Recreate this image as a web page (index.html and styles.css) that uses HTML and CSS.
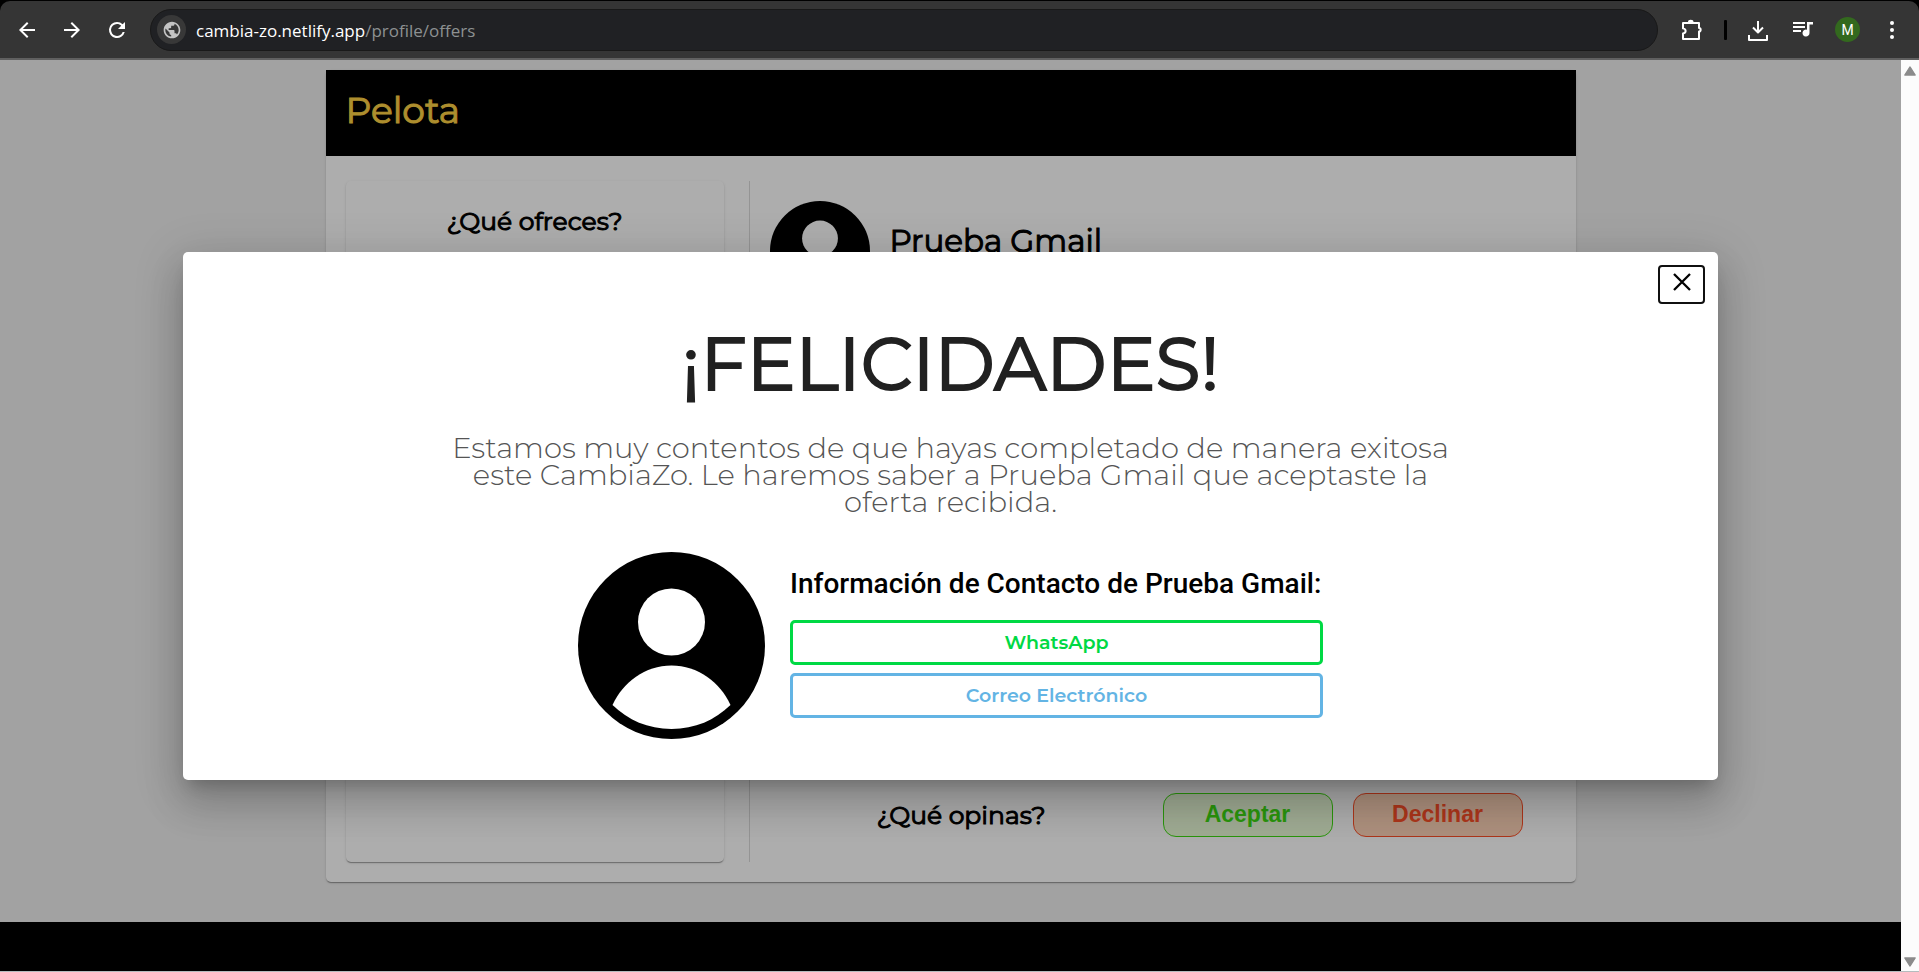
FILE: index.html
```html
<!DOCTYPE html>
<html lang="es">
<head>
<meta charset="utf-8">
<title>CambiaZo</title>
<link rel="stylesheet" href="styles.css">
</head>
<body>
<div class="browser">
  <div class="tabstrip">
  <header class="toolbar">
    <nav class="nav">
      <button class="tool" aria-label="Atrás"><svg class="icon" viewBox="0 0 24 24"><path d="M20 11H7.83l5.59-5.59L12 4l-8 8 8 8 1.41-1.41L7.83 13H20v-2z"/></svg></button>
      <button class="tool" aria-label="Adelante"><svg class="icon" viewBox="0 0 24 24"><path d="M12 4l-1.41 1.41L16.17 11H4v2h12.17l-5.58 5.59L12 20l8-8z"/></svg></button>
      <button class="tool" aria-label="Recargar"><svg class="icon" viewBox="0 0 24 24"><path d="M17.65 6.35A7.96 7.96 0 0 0 12 4a8 8 0 1 0 7.73 10h-2.08A6 6 0 1 1 12 6c1.66 0 3.14.69 4.22 1.78L13 11h7V4l-2.35 2.35z"/></svg></button>
    </nav>
    <div class="address">
      <span class="site"><svg class="globe" viewBox="0 0 24 24"><path d="M12 2C6.48 2 2 6.48 2 12s4.480 10 10 10 10-4.480 10-10S17.520 2 12 2zm-1 17.930c-3.950-.490-7-3.850-7-7.930 0-.620.080-1.210.210-1.790L9 15v1c0 1.100.900 2 2 2v1.930zm6.900-2.540c-.260-.810-1-1.390-1.900-1.390h-1v-3c0-.550-.450-1-1-1H8v-2h2c.550 0 1-.450 1-1V7h2c1.100 0 2-.900 2-2v-.410c2.930 1.190 5 4.060 5 7.410 0 2.080-.800 3.970-2.100 5.390z"/></svg></span>
      <span class="url">cambia-zo.netlify.app<span class="path">/profile/offers</span></span>
    </div>
    <div class="actions">
      <button class="tool" aria-label="Extensiones"><svg class="icon line" viewBox="0 0 24 24"><path d="M3 5h16v5c2.200 0 2.200 3.600 0 3.600V21H3v-5.600c3.500-.800 3.500-4.200 0-5z"/><path d="M9 4c0-1.600 3.500-1.600 3.500 0z"/></svg></button>
      <span class="bar"></span>
      <button class="tool" aria-label="Descargas"><svg class="icon line" viewBox="0 0 24 24"><path d="M11 3v11M6 9.500l5 5 5-5M2 17v5h18v-5"/></svg></button>
      <button class="tool" aria-label="Multimedia"><svg class="icon" viewBox="0 0 24 24"><path d="M2 4h12v2H2zM2 8h12v2H2zM2 12h8v2H2zM16 4h6v2.500h-3.500V15a3.500 3.500 0 1 1-2.500-3.300z"/></svg></button>
      <button class="user" aria-label="Perfil">M</button>
      <button class="tool" aria-label="Menú"><svg class="icon" viewBox="0 0 24 24"><circle cx="12" cy="5" r="2"/><circle cx="12" cy="12" r="2"/><circle cx="12" cy="19" r="2"/></svg></button>
    </div>
  </header>
  </div>

  <div class="window">
    <div class="page">
      <main class="content">
        <article class="card">
          <header class="card-head"><h1 class="product">Pelota</h1></header>
          <div class="card-body">
            <section class="offer"><h2 class="question">¿Qué ofreces?</h2></section>
            <section class="details">
              <div class="person">
                <svg class="avatar" viewBox="0 0 187 187"><circle cx="93.500" cy="93.500" r="93.500"/><circle class="hole" cx="93.500" cy="70" r="33.500"/><path class="hole" d="M34.500 153C45 130 67 113.500 93.500 113.500S142 130 152.500 153C137 168 117 177 93.500 177S50 168 34.500 153z"/></svg>
                <h2 class="name">Prueba Gmail</h2>
              </div>
              <div class="answer">
                <h2 class="question">¿Qué opinas?</h2>
                <div class="choices">
                  <button class="choice accept">Aceptar</button>
                  <button class="choice decline">Declinar</button>
                </div>
              </div>
            </section>
          </div>
        </article>
      </main>
      <footer class="footer"></footer>
      <div class="overlay">
        <section class="dialog" role="dialog" aria-modal="true" aria-labelledby="dialog-title">
          <div class="dialog-top">
            <button class="close" aria-label="Cerrar"><svg class="cross" viewBox="0 0 24 24"><path d="M4 4l16 16M20 4L4 20"/></svg></button>
          </div>
          <h2 class="title" id="dialog-title">¡FELICIDADES!</h2>
          <p class="message">Estamos muy contentos de que hayas completado de manera exitosa este CambiaZo. Le haremos saber a Prueba Gmail que aceptaste la oferta recibida.</p>
          <div class="contact">
            <svg class="portrait" viewBox="0 0 187 187"><circle cx="93.500" cy="93.500" r="93.500"/><circle class="hole" cx="93.500" cy="70" r="33.500"/><path class="hole" d="M34.500 153C45 130 67 113.500 93.500 113.500S142 130 152.500 153C137 168 117 177 93.500 177S50 168 34.500 153z"/></svg>
            <div class="links">
              <h3 class="contact-title">Información de Contacto de Prueba Gmail:</h3>
              <button class="link whatsapp">WhatsApp</button>
              <button class="link mail">Correo Electrónico</button>
            </div>
          </div>
        </section>
      </div>
    </div>
    <div class="scrollbar">
      <svg class="arrow" viewBox="0 0 12 10"><path d="M6 1.500L10.500 8.500h-9z"/></svg>
      <svg class="arrow" viewBox="0 0 12 10"><path d="M6 8.500L10.500 1.500h-9z"/></svg>
    </div>
  </div>
</div>
</body>
</html>
```

FILE: styles.css
```css
* { box-sizing: border-box; }
body { margin: 0; font-family: Montserrat, Inter, sans-serif; color: #000; }
h1, h2, h3, p { margin: 0; }
button { font: inherit; margin: 0; padding: 0; cursor: pointer; }

.browser { display: flex; flex-direction: column; height: 100vh; border-bottom: 1px solid #b4bcbe; }

/* Browser toolbar */
.tabstrip { background: #000; padding-top: 1px; }
.toolbar {
  display: flex; align-items: center; height: 59px; padding: 0 15px;
  background: #353535; border-bottom: 2px solid #606060; border-radius: 10px 10px 0 0;
}
.nav { display: flex; gap: 21px; margin-right: 21px; }
.tool { display: flex; border: 0; background: none; color: #fff; }
.icon { width: 24px; height: 24px; fill: currentColor; }
.icon.line { fill: none; stroke: currentColor; stroke-width: 2; stroke-linejoin: round; }
.address {
  display: flex; flex: 1; align-items: center; gap: 10px; height: 42px; padding-left: 6px;
  background: #202124; border: 1px solid #191919; border-radius: 21px;
}
.site { display: flex; align-items: center; justify-content: center; width: 29px; height: 29px; border-radius: 50%; background: #383838; }
.globe { width: 20px; height: 20px; fill: #c4c4c4; }
.url { padding-top: 2px; font-family: "Segoe UI", "Open Sans", sans-serif; font-size: 17px; color: #fff; }
.path { color: #8d9192; }
.actions { display: flex; align-items: center; gap: 20px; margin-left: 22px; }
.bar { width: 3px; height: 20px; background: #000; border-radius: 1px; }
.user { width: 25px; height: 25px; border: 0; border-radius: 50%; background: #33691e; color: #fff; font-family: Roboto, sans-serif; font-size: 14px; }

/* Page */
.window { display: flex; flex: 1; min-height: 0; }
.page { position: relative; display: flex; flex: 1; flex-direction: column; background: #efefef; overflow: hidden; }
.content { display: flex; flex: 1; justify-content: center; padding: 10px 20px 40px; }
.card {
  display: flex; flex-direction: column; width: 100%; max-width: 1250px; background: #fff; border-radius: 5px;
  box-shadow: 0 2px 1px -1px rgba(0,0,0,.2), 0 1px 1px rgba(0,0,0,.14), 0 1px 3px rgba(0,0,0,.12);
}
.card-head { padding: 18px 20px 24px; background: #000; }
.product { font-size: 36px; font-weight: 400; line-height: 44px; color: #ffd244; -webkit-text-stroke: 1px currentColor; }
.card-body { display: flex; flex: 1; gap: 25px; padding: 25px 20px 20px; }
.offer {
  flex: 0 0 378px; padding: 24px; text-align: center; border-radius: 5px;
  box-shadow: 0 2px 1px -1px rgba(0,0,0,.2), 0 1px 1px rgba(0,0,0,.14), 0 1px 3px rgba(0,0,0,.12);
}
.question { font-size: 25px; font-weight: 400; line-height: 32px; -webkit-text-stroke: 1px currentColor; }
.details { display: flex; flex: 1; flex-direction: column; justify-content: space-between; padding: 20px 33px 25px 20px; border-left: 1px solid #dadada; }
.person { display: flex; align-items: center; gap: 20px; }
.avatar { width: 100px; height: 100px; }
.hole { fill: #fff; }
.name { font-size: 31px; font-weight: 400; line-height: 40px; padding-bottom: 20px; -webkit-text-stroke: 1px currentColor; }
.answer { display: flex; align-items: center; }
.answer .question { flex: 1; padding-right: 10px; text-align: center; }
.choices { display: flex; gap: 20px; }
.choice { width: 170px; height: 44px; padding-bottom: 2px; border: 1px solid; border-radius: 13px; font-family: "Liberation Sans", Arial, sans-serif; font-size: 23px; font-weight: 700; }
.accept { color: #3fdd13; background: #eafcd9; }
.decline { color: #ff5028; background: #ffd4b8; }
.footer { height: 49px; background: #000; }

/* Dialog */
.overlay { position: absolute; inset: 0; display: flex; align-items: center; justify-content: center; background: rgba(0,0,0,.32); }
.dialog {
  width: 80vw; padding: 13px 13px 41px; background: #fff; border-radius: 5px;
  box-shadow: 0 11px 15px -7px rgba(0,0,0,.2), 0 24px 38px 3px rgba(0,0,0,.14), 0 9px 46px 8px rgba(0,0,0,.12);
}
.dialog-top { display: flex; justify-content: flex-end; }
.close { display: flex; justify-content: center; width: 47px; height: 39px; padding-top: 3px; border: 2px solid #101010; border-radius: 4px; background: #fff; }
.cross { width: 24px; height: 24px; fill: none; stroke: #000; stroke-width: 2.300; }
.title { margin-top: 15px; font-size: 73px; font-weight: 400; line-height: 90px; text-align: center; color: #212121; -webkit-text-stroke: 2px currentColor; }
.message { max-width: 1020px; margin: 25px auto 37px; font-size: 29px; font-weight: 300; line-height: 27px; text-align: center; color: #555; }
.contact { display: flex; justify-content: center; align-items: center; gap: 25px; }
.portrait { width: 187px; height: 187px; }
.links { display: flex; flex-direction: column; gap: 8px; width: 533px; padding-bottom: 4px; }
.contact-title { margin-bottom: 12px; font-family: Roboto, sans-serif; font-size: 28px; font-weight: 500; line-height: 32px; white-space: nowrap; }
.link { height: 45px; border: 3px solid; border-radius: 5px; background: #fff; font-size: 19px; font-weight: 600; }
.whatsapp { color: #00d944; }
.mail { color: #63b4e4; }

/* Scrollbar */
.scrollbar { display: flex; flex-direction: column; justify-content: space-between; align-items: center; width: 18px; padding: 5px 0 3px; background: #fcfcfc; }
.arrow { width: 14px; height: 12px; fill: #8b8b8b; stroke: #8b8b8b; stroke-width: 1; stroke-linejoin: round; }
```
